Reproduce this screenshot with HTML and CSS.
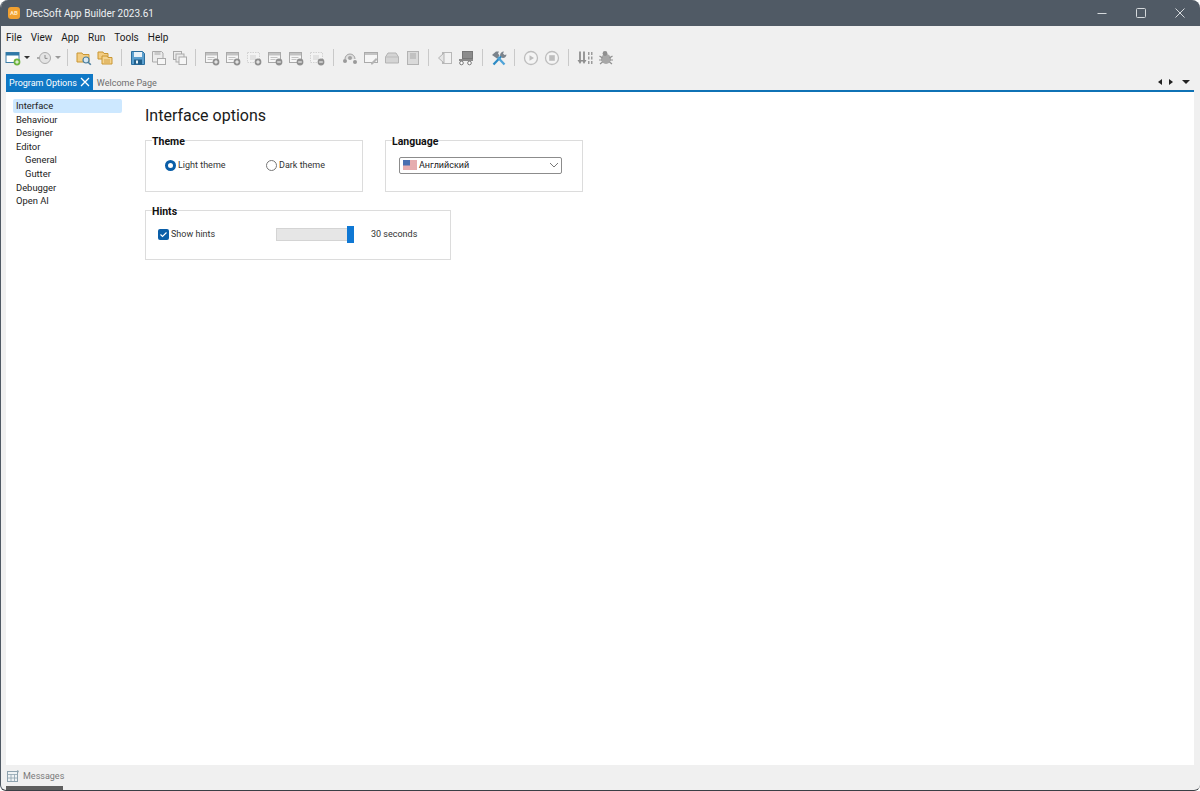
FILE: index.html
```html
<!DOCTYPE html>
<html lang="en">
<head>
  <meta charset="UTF-8" />
  <title>DecSoft App Builder 2023.61</title>
  <link rel="stylesheet" href="styles.css">
</head>
<body>

  <svg class="defs" width="0" height="0">
    <defs>
      <symbol id="win" viewBox="0 0 16 16">
        <rect x="1.500" y="2.500" width="12" height="10" fill="#f6f6f6" stroke="#a9a9a9"/>
        <rect x="2" y="3" width="11" height="2.500" fill="#c2c2c2"/>
        <rect x="3.500" y="7" width="7" height="1" fill="#c4c4c4"/>
        <rect x="3.500" y="9" width="5" height="1" fill="#c4c4c4"/>
      </symbol>
      <symbol id="win-dots" viewBox="0 0 16 16">
        <rect x="1.500" y="2.500" width="12" height="10" fill="#f3f3f3" stroke="#d2d2d2" stroke-dasharray="1.500 1"/>
        <rect x="4" y="5" width="6" height="5" fill="#e2e2e2"/>
      </symbol>
      <symbol id="plus" viewBox="0 0 16 16">
        <circle cx="12" cy="12" r="3.400" fill="#909090"/>
        <path d="M10.200 12h3.600M12 10.200v3.600" stroke="#fff"/>
      </symbol>
      <symbol id="minus" viewBox="0 0 16 16">
        <circle cx="12" cy="12" r="3.400" fill="#909090"/>
        <path d="M10.200 12h3.600" stroke="#fff"/>
      </symbol>
    </defs>
  </svg>

  <div class="window">

    <header class="titlebar">
      <div class="app-logo">AB</div>
      <span class="app-title">DecSoft App Builder 2023.61</span>
      <div class="win-buttons">
        <svg width="12" height="12" viewBox="0 0 12 12"><path d="M1.500 6.500h9" stroke="#d5d9dc" stroke-width="1.200"/></svg>
        <svg width="12" height="12" viewBox="0 0 12 12"><rect x="1.500" y="1.500" width="9" height="9" rx="1" fill="none" stroke="#d5d9dc"/></svg>
        <svg width="12" height="12" viewBox="0 0 12 12"><path d="M1.500 1.500l9 9M10.500 1.500l-9 9" stroke="#d5d9dc"/></svg>
      </div>
    </header>

    <nav class="menubar">
      <span>File</span>
      <span>View</span>
      <span>App</span>
      <span>Run</span>
      <span>Tools</span>
      <span>Help</span>
    </nav>

    <div class="toolbar">
      <span class="tool tool-new">
        <svg width="16" height="16" viewBox="0 0 16 16">
          <rect x="1" y="2.500" width="13" height="10" fill="#fff" stroke="#3f7fa8"/>
          <rect x="1" y="2.500" width="13" height="3" fill="#2f78a8"/>
          <circle cx="12" cy="12" r="3.400" fill="#6fb43f"/>
          <path d="M10.200 12h3.600M12 10.200v3.600" stroke="#fff"/>
        </svg>
      </span>
      <span class="caret"></span>
      <span class="tool tool-hist">
        <svg width="16" height="16" viewBox="0 0 16 16">
          <circle cx="9" cy="8" r="5.500" fill="#e4e4e4" stroke="#ababab"/>
          <path d="M9 5v3.400h2.500" fill="none" stroke="#8d8d8d"/>
          <path d="M1 8h3" stroke="#ababab" stroke-width="2"/>
        </svg>
      </span>
      <span class="caret caret-off"></span>
      <span class="sep"></span>
      <span class="tool">
        <svg width="16" height="16" viewBox="0 0 16 16">
          <path d="M1 3h5l1 1.500h6V12H1z" fill="#f3cd83" stroke="#c99632"/>
          <circle cx="10" cy="10" r="3" fill="#d5e6f2" stroke="#4b7f9f" stroke-width="1.200"/>
          <path d="M12.200 12.200l2.600 2.600" stroke="#4b7f9f" stroke-width="1.600"/>
        </svg>
      </span>
      <span class="tool">
        <svg width="16" height="16" viewBox="0 0 16 16">
          <path d="M1 2h5l1 1.500h4V9H1z" fill="#f3cd83" stroke="#c99632"/>
          <path d="M5 6h5l1 1.500h4V14H5z" fill="#f5d48f" stroke="#c99632"/>
          <path d="M7 10h6M7 12h6" stroke="#c99632" stroke-width=".8"/>
        </svg>
      </span>
      <span class="sep"></span>
      <span class="tool">
        <svg width="16" height="16" viewBox="0 0 16 16">
          <path d="M1.500 1.500h11l2 2v11h-13z" fill="#5b9fce" stroke="#2c6f9e"/>
          <rect x="4" y="2" width="8" height="5" fill="#e9f2f8"/>
          <rect x="4" y="9.500" width="8" height="5" fill="#1f5f8b"/>
          <rect x="6" y="10.500" width="2" height="3" fill="#e9f2f8"/>
        </svg>
      </span>
      <span class="tool">
        <svg width="16" height="16" viewBox="0 0 16 16">
          <path d="M1.500 1.500h9l1.500 1.500v9H1.500z" fill="#ececec" stroke="#aaa"/>
          <rect x="3.500" y="2" width="6" height="3" fill="#c9c9c9"/>
          <rect x="6.500" y="8.500" width="8" height="6" fill="#f6f6f6" stroke="#aaa"/>
        </svg>
      </span>
      <span class="tool">
        <svg width="16" height="16" viewBox="0 0 16 16">
          <rect x="1.500" y="1.500" width="8" height="8" fill="#ececec" stroke="#aaa"/>
          <rect x="4" y="4" width="8" height="8" fill="#ececec" stroke="#aaa"/>
          <rect x="7" y="7" width="7.500" height="7.500" fill="#f6f6f6" stroke="#aaa"/>
        </svg>
      </span>
      <span class="sep"></span>
      <span class="tool"><svg width="16" height="16"><use href="#win"/><use href="#plus"/></svg></span>
      <span class="tool"><svg width="16" height="16"><use href="#win"/><use href="#plus"/></svg></span>
      <span class="tool"><svg width="16" height="16"><use href="#win-dots"/><use href="#plus"/></svg></span>
      <span class="tool"><svg width="16" height="16"><use href="#win"/><use href="#minus"/></svg></span>
      <span class="tool"><svg width="16" height="16"><use href="#win"/><use href="#minus"/></svg></span>
      <span class="tool"><svg width="16" height="16"><use href="#win-dots"/><use href="#minus"/></svg></span>
      <span class="sep"></span>
      <span class="tool">
        <svg width="16" height="16" viewBox="0 0 16 16">
          <path d="M3 9a5 5 0 0 1 10 0" fill="#dedede" stroke="#a3a3a3"/>
          <circle cx="8" cy="8" r="2" fill="#a3a3a3"/>
          <circle cx="3" cy="11" r="2" fill="#9a9a9a"/>
          <circle cx="13" cy="12" r="2" fill="#9a9a9a"/>
        </svg>
      </span>
      <span class="tool">
        <svg width="16" height="16" viewBox="0 0 16 16">
          <rect x="1.500" y="2.500" width="13" height="10" fill="#f6f6f6" stroke="#aaa"/>
          <rect x="2" y="3" width="12" height="2" fill="#c4c4c4"/>
          <path d="M8 13l5-5 1.500 1.500-5 5H8z" fill="#b5b5b5"/>
        </svg>
      </span>
      <span class="tool">
        <svg width="16" height="16" viewBox="0 0 16 16">
          <path d="M1.500 7L4 3h8l2.500 4v6h-13z" fill="#d4d4d4" stroke="#b3b3b3"/>
          <path d="M1.500 7h13" stroke="#bcbcbc"/>
        </svg>
      </span>
      <span class="tool">
        <svg width="16" height="16" viewBox="0 0 16 16">
          <rect x="2.500" y="1.500" width="11" height="13" fill="#dadada" stroke="#b3b3b3"/>
          <path d="M5 4h6M5 6h6M5 8h6" stroke="#a9a9a9"/>
        </svg>
      </span>
      <span class="sep"></span>
      <span class="tool">
        <svg width="16" height="16" viewBox="0 0 16 16">
          <rect x="5.500" y="2.500" width="9" height="11" fill="#f2f2f2" stroke="#b8b8b8"/>
          <path d="M7 3L1.500 8 7 13z" fill="#e6e6e6" stroke="#b3b3b3"/>
        </svg>
      </span>
      <span class="tool">
        <svg width="16" height="16" viewBox="0 0 16 16">
          <rect x="4.500" y="1.500" width="10" height="7" fill="#8c8c8c" stroke="#777"/>
          <rect x="1" y="9" width="14" height="2" fill="#8a8a8a"/>
          <circle cx="3.500" cy="13" r="1.800" fill="#fff" stroke="#777"/>
          <circle cx="11.500" cy="13" r="1.800" fill="#fff" stroke="#777"/>
        </svg>
      </span>
      <span class="sep"></span>
      <span class="tool">
        <svg width="16" height="16" viewBox="0 0 16 16">
          <path d="M2.500 14.500L10.500 6" stroke="#2b8ac4" stroke-width="2.200"/>
          <path d="M13.500 14.500L6 6.500" stroke="#4ea3d8" stroke-width="2.200"/>
          <path d="M1 5l4-3.500h3l-1 2 1.500 2L6 8.500z" fill="#7c848c"/>
          <path d="M9 5.500c0-2 1.500-4 4-4l-1 2 1.500 1.500 2-.5c0 2-2 4-4 3.500z" fill="#7c848c"/>
        </svg>
      </span>
      <span class="sep"></span>
      <span class="tool">
        <svg width="16" height="16" viewBox="0 0 16 16">
          <circle cx="8" cy="8" r="6.500" fill="#f4f4f4" stroke="#bdbdbd" stroke-width="1.300"/>
          <path d="M6.500 5.200v5.600L11 8z" fill="#bdbdbd"/>
        </svg>
      </span>
      <span class="tool">
        <svg width="16" height="16" viewBox="0 0 16 16">
          <circle cx="8" cy="8" r="6.500" fill="#f4f4f4" stroke="#bdbdbd" stroke-width="1.300"/>
          <rect x="5.200" y="5.200" width="5.600" height="5.600" fill="#bdbdbd"/>
        </svg>
      </span>
      <span class="sep"></span>
      <span class="tool">
        <svg width="16" height="16" viewBox="0 0 16 16">
          <path d="M3 1.500v10M7 1.500v10" stroke="#8f8f8f" stroke-width="1.800"/>
          <path d="M.5 10h5L3 14zM4.500 10h5L7 14z" fill="#8f8f8f"/>
          <path d="M11 2h1.500v3H11zM14 2h1.500v3H14zM11 6.500h1.500v3H11zM14 6.500h1.500v3H14zM11 11h1.500v3H11zM14 11h1.500v3H14z" fill="#9b9b9b"/>
        </svg>
      </span>
      <span class="tool">
        <svg width="16" height="16" viewBox="0 0 16 16">
          <ellipse cx="8" cy="9" rx="5" ry="5" fill="#a8a8a8"/>
          <circle cx="7" cy="3.500" r="2.400" fill="#8f8f8f"/>
          <path d="M1.500 6l3 2M14.500 6l-3 2M1 10h3M15 10h-3M2 14l2.500-2M14 14l-2.500-2" stroke="#8f8f8f" stroke-width="1.200"/>
        </svg>
      </span>
    </div>

    <div class="tabbar">
      <div class="tab tab-active">
        <span>Program Options</span>
        <svg width="10" height="10" viewBox="0 0 10 10"><path d="M1 1l8 8M9 1l-8 8" stroke="#fff" stroke-width="1.300"/></svg>
      </div>
      <div class="tab">Welcome Page</div>
      <div class="tab-arrows">
        <span class="arrow-left"></span>
        <span class="arrow-right"></span>
        <span class="arrow-down"></span>
      </div>
    </div>

    <main class="main">
      <ul class="tree">
        <li class="selected">Interface</li>
        <li>Behaviour</li>
        <li>Designer</li>
        <li>Editor</li>
        <li class="sub">General</li>
        <li class="sub">Gutter</li>
        <li>Debugger</li>
        <li>Open AI</li>
      </ul>

      <section class="options">
        <h1>Interface options</h1>

        <div class="group-row">
          <fieldset class="group group-theme">
            <legend>Theme</legend>
            <label class="radio radio-light"><span class="radio-dot on"></span>Light theme</label>
            <label class="radio"><span class="radio-dot"></span>Dark theme</label>
          </fieldset>

          <fieldset class="group group-lang">
            <legend>Language</legend>
            <div class="select">
              <svg class="flag" width="14" height="10" viewBox="0 0 14 10">
                <rect width="14" height="10" fill="#f3f3f3"/>
                <path d="M0 1h14M0 3h14M0 5h14M0 7h14M0 9h14" stroke="#d9666b" stroke-width="1"/>
                <rect width="7" height="5.500" fill="#4a6fb0"/>
              </svg>
              <span>Английский</span>
              <svg class="chevron" width="10" height="6" viewBox="0 0 10 6"><path d="M1 1l4 4 4-4" fill="none" stroke="#777"/></svg>
            </div>
          </fieldset>
        </div>

        <fieldset class="group group-hints">
          <legend>Hints</legend>
          <label class="check">
            <span class="check-box">
              <svg width="9" height="9" viewBox="0 0 9 9"><path d="M1.500 4.500l2 2 4-4" fill="none" stroke="#fff" stroke-width="1.100"/></svg>
            </span>
            Show hints
          </label>
          <div class="slider"><span class="slider-thumb"></span></div>
          <span class="slider-value">30 seconds</span>
        </fieldset>
      </section>
    </main>

    <footer class="statusbar">
      <div class="status-tab">
        <svg width="14" height="14" viewBox="0 0 14 14">
          <rect x="1.500" y="2.500" width="10" height="10" fill="#eef2f4" stroke="#8ea2ae"/>
          <path d="M1.500 5.500h10M5 5.500v7M8.500 5.500v7M1.500 9h10" stroke="#8ea2ae" stroke-width=".8"/>
          <path d="M11 1l2 1-1.500 3z" fill="#8ea2ae"/>
        </svg>
        <span>Messages</span>
      </div>
      <div class="status-grip"></div>
    </footer>

  </div>

</body>
</html>
```

FILE: styles.css
```css
html, body {
  margin: 0;
  padding: 0;
  background: #fff;
}

body {
  font-family: Roboto, "Open Sans", sans-serif;
  font-size: 9px;
  color: #222;
}

.defs {
  position: absolute;
}

.window {
  height: 791px;
  display: flex;
  flex-direction: column;
  overflow: hidden;
  background: #f0f0f0;
  border-radius: 8px 8px 6px 6px;
  border-left: 1px solid #4f5964;
  border-bottom: 1px solid #3a3f45;
  box-sizing: border-box;
}

/* Barra de titulo */
.titlebar {
  height: 26px;
  flex: none;
  background: #505a65;
  color: #eef0f2;
  display: flex;
  align-items: center;
  padding-left: 7px;
}

.app-logo {
  width: 12px;
  height: 12px;
  border-radius: 3px;
  background: #f0a030;
  color: #ffe9c4;
  font-size: 6px;
  font-weight: 700;
  line-height: 12px;
  text-align: center;
  margin-right: 6px;
}

.app-title {
  font-size: 10px;
}

.win-buttons {
  margin-left: auto;
  display: flex;
  gap: 27px;
  padding-right: 14px;
}

/* Menu */
.menubar {
  height: 22px;
  flex: none;
  display: flex;
  align-items: center;
  gap: 9px;
  padding-left: 5px;
  font-size: 10px;
  color: #1a1a1a;
}

/* Barra de herramientas */
.toolbar {
  height: 21px;
  flex: none;
  display: flex;
  align-items: center;
  padding: 0 0 2px 3px;
  box-sizing: border-box;
}

.tool {
  width: 21px;
  height: 16px;
  display: flex;
  justify-content: center;
}

.tool-new {
  width: 17px;
}

.tool-hist {
  width: 20px;
}

.caret {
  width: 0;
  height: 0;
  margin: 0 4px 0 3px;
  border-left: 3px solid transparent;
  border-right: 3px solid transparent;
  border-top: 3px solid #333;
}

.caret-off {
  border-top-color: #999;
  margin: 0 1px;
}

.sep {
  width: 1px;
  height: 17px;
  background: #c9c9c9;
  margin: 0 5.250px;
}

/* Pestañas */
.tabbar {
  height: 23px;
  flex: none;
  display: flex;
  align-items: flex-end;
  margin: 0 6px 0 5px;
  border-bottom: 2px solid #0f72b5;
  box-sizing: border-box;
}

.tab {
  height: 16px;
  display: flex;
  align-items: center;
  padding: 2px 4px 0;
  box-sizing: border-box;
  color: #6d6d6d;
}

.tab-active {
  background: #0f78c6;
  color: #fff;
  gap: 3px;
  padding: 2px 3px 0;
}

.tab-active svg {
  margin-top: -2px;
}

.tab-arrows {
  margin-left: auto;
  display: flex;
  align-items: center;
  gap: 7px;
  padding: 0 4px 5px 0;
}

.arrow-left,
.arrow-right {
  width: 0;
  height: 0;
  border-top: 3px solid transparent;
  border-bottom: 3px solid transparent;
}

.arrow-left {
  border-right: 4px solid #222;
}

.arrow-right {
  border-left: 4px solid #222;
}

.arrow-down {
  width: 0;
  height: 0;
  margin-left: 2px;
  border-left: 4px solid transparent;
  border-right: 4px solid transparent;
  border-top: 4px solid #222;
}

/* Contenido */
.main {
  flex: 1;
  display: flex;
  background: #fff;
  min-height: 0;
  margin: 0 6px 0 5px;
}

.tree {
  list-style: none;
  width: 109px;
  margin: 7px 0 0 7px;
  padding: 0;
  flex: none;
  font-size: 9.400px;
}

.tree li {
  height: 13.600px;
  line-height: 13.600px;
  padding-left: 3px;
}

.tree .sub {
  padding-left: 12px;
}

.tree .selected {
  background: #cde8ff;
  border-radius: 2px;
}

.options {
  margin-left: 23px;
  padding-top: 13px;
}

h1 {
  margin: 0 0 5px;
  font-size: 16px;
  font-weight: 400;
  line-height: 22px;
  color: #1a1a1a;
}

.group-row {
  display: flex;
  gap: 22px;
  margin-bottom: 10px;
}

fieldset.group {
  margin: 0;
  padding: 0 0 9px;
  border: 1px solid #dcdcdc;
  box-sizing: border-box;
  display: flex;
  align-items: center;
  min-inline-size: auto;
}

legend {
  font-size: 10.500px;
  font-weight: 700;
  color: #111;
  padding: 4px 0 0;
  margin-left: 6px;
  line-height: 12px;
}

.group-theme {
  width: 218px;
  height: 60px;
}

.group-lang {
  width: 198px;
  height: 60px;
}

.group-hints {
  width: 306px;
  height: 58px;
}

.radio {
  display: flex;
  align-items: center;
  gap: 2px;
  color: #333;
}

.radio-light {
  margin-left: 19px;
  width: 101px;
}

.radio-dot {
  width: 9px;
  height: 9px;
  border: 1px solid #777;
  border-radius: 50%;
  background: #fff;
}

.radio-dot.on {
  width: 5px;
  height: 5px;
  border: 3px solid #0a5ea8;
}

.select {
  width: 163px;
  height: 17px;
  margin-left: 13px;
  border: 1px solid #8c8c8c;
  border-radius: 2px;
  box-sizing: border-box;
  display: flex;
  align-items: center;
  padding: 0 2px 0 3px;
  gap: 2px;
  color: #222;
  background: #fff;
}

.flag {
  flex: none;
}

.chevron {
  margin-left: auto;
}

.check {
  display: flex;
  align-items: center;
  gap: 2px;
  margin-left: 12px;
  width: 118px;
  color: #333;
}

.check-box {
  width: 11px;
  height: 11px;
  border-radius: 2px;
  background: #0a5ea8;
  display: flex;
  align-items: center;
  justify-content: center;
}

.slider {
  width: 78px;
  height: 13px;
  background: #e6e6e6;
  border: 1px solid #d4d4d4;
  border-right: 0;
  box-sizing: border-box;
  display: flex;
  justify-content: flex-end;
  align-items: center;
}

.slider-thumb {
  width: 7px;
  height: 17px;
  background: #0f78d4;
  flex: none;
}

.slider-value {
  margin-left: 17px;
  color: #333;
}

/* Barra inferior */
.statusbar {
  height: 25px;
  flex: none;
  display: flex;
  flex-direction: column;
  justify-content: space-between;
}

.status-tab {
  display: flex;
  align-items: center;
  gap: 3px;
  padding: 4px 0 0 5px;
  color: #7a7a7a;
}

.status-grip {
  width: 57px;
  height: 4px;
  margin-left: 5px;
  background: #5e5e5e;
}
```
